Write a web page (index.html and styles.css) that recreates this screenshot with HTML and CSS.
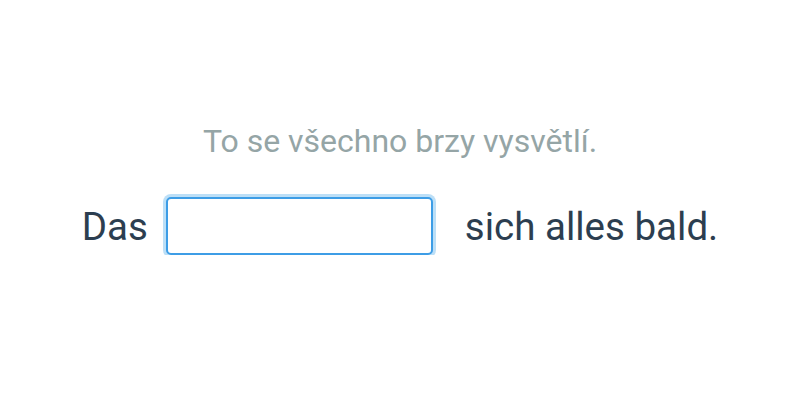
FILE: index.html
```html
<!DOCTYPE html>
<html lang="cs">
<head>
  <meta charset="UTF-8">
  <title>Doplň slovo</title>
  <link rel="stylesheet" href="styles.css">
</head>
<body>
  <div class="exercise">
    <p class="hint">To se všechno brzy vysvětlí.</p>
    <div class="sentence">
      <span>Das</span>
      <input type="text" class="gap-input" autofocus>
      <span>sich alles bald.</span>
    </div>
  </div>
</body>
</html>
```

FILE: styles.css
```css
body {
  margin: 0;
  font-family: Roboto, "Noto Sans", sans-serif;
  background: #fff;
}

.exercise {
  padding-top: 122px;
  text-align: center;
}

.hint {
  margin: 0 0 37px;
  font-size: 32px;
  color: #95a5a6;
}

.sentence {
  display: flex;
  align-items: center;
  justify-content: center;
  font-size: 38.5px;
  color: #2c3e50;
}

.gap-input {
  box-sizing: border-box;
  width: 267px;
  height: 58px;
  margin: 0 32px 0 18px;
  border: 2px solid #3d9de6;
  border-radius: 5px;
  box-shadow: 0 0 0 3px #bcdff7;
  font-size: 32px;
  font-family: inherit;
  outline: none;
}
```
